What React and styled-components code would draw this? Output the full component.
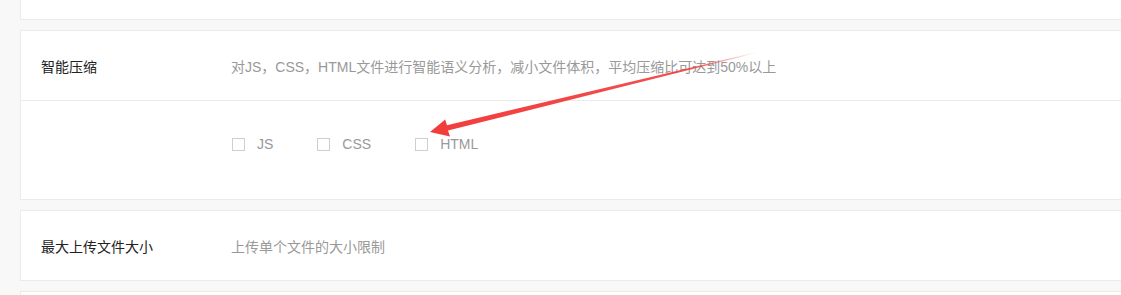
import React from "react";
import styled, { createGlobalStyle } from "styled-components";

const GlobalStyle = createGlobalStyle`
  html, body {
    margin: 0;
    padding: 0;
    background: #f8f8f8;
    overflow: hidden;
  }
  body {
    font-family: "Liberation Sans", "Noto Sans CJK SC", sans-serif;
    font-size: 14px;
  }
`;

const settings = [
  { label: "", desc: "" },
  {
    label: "智能压缩",
    desc: "对JS，CSS，HTML文件进行智能语义分析，减小文件体积，平均压缩比可达到50%以上",
    options: ["JS", "CSS", "HTML"],
  },
  { label: "最大上传文件大小", desc: "上传单个文件的大小限制" },
  { label: "", desc: "" },
];

export default function App() {
  return (
    <>
      <GlobalStyle />
      <Page>
        {settings.map((item, i) => (
          <Card key={i}>
            <Row>
              <Label>{item.label}</Label>
              <Desc>{item.desc}</Desc>
            </Row>
            {item.options && (
              <Body>
                {item.options.map((opt) => (
                  <Option key={opt}>
                    <Box type="checkbox" />
                    <span>{opt}</span>
                  </Option>
                ))}
              </Body>
            )}
          </Card>
        ))}
        <Arrow width="1121" height="295" viewBox="0 0 1121 295">
          <defs>
            <linearGradient id="fade" x1="757" y1="52" x2="430" y2="132" gradientUnits="userSpaceOnUse">
              <stop offset="0" stopColor="#f23c3c" stopOpacity="0" />
              <stop offset="0.2" stopColor="#f23c3c" stopOpacity="0.9" />
              <stop offset="1" stopColor="#f23c3c" />
            </linearGradient>
          </defs>
          <polygon
            fill="url(#fade)"
            points="757,52 757.2,52.8 448,130.6 450,136.5 430,132 445.2,119.4 447,125.2"
          />
        </Arrow>
      </Page>
    </>
  );
}

const Page = styled.div`
  position: relative;
  display: flex;
  flex-direction: column;
  gap: 10px;
  margin-top: -51px;
  padding-left: 20px;
  margin-right: -20px;
`;

const Card = styled.section`
  background: #fff;
  border: 1px solid #ebebeb;
`;

const Row = styled.div`
  display: flex;
  align-items: center;
  height: 69px;
  padding-left: 20px;
`;

const Label = styled.div`
  width: 190px;
  flex-shrink: 0;
  color: #222;
`;

const Desc = styled.div`
  color: #999;
`;

const Body = styled.div`
  display: flex;
  align-items: center;
  gap: 44px;
  height: 99px;
  box-sizing: border-box;
  border-top: 1px solid #ebebeb;
  padding: 0 0 12px 211px;
`;

const Option = styled.label`
  display: flex;
  align-items: center;
  gap: 12px;
  color: #999;
`;

const Box = styled.input`
  appearance: none;
  margin: 0;
  width: 13px;
  height: 13px;
  border: 1px solid #cfcfcf;
  background: #fff;
  box-sizing: border-box;
`;

const Arrow = styled.svg`
  position: absolute;
  left: 0;
  top: 51px;
  pointer-events: none;
`;
